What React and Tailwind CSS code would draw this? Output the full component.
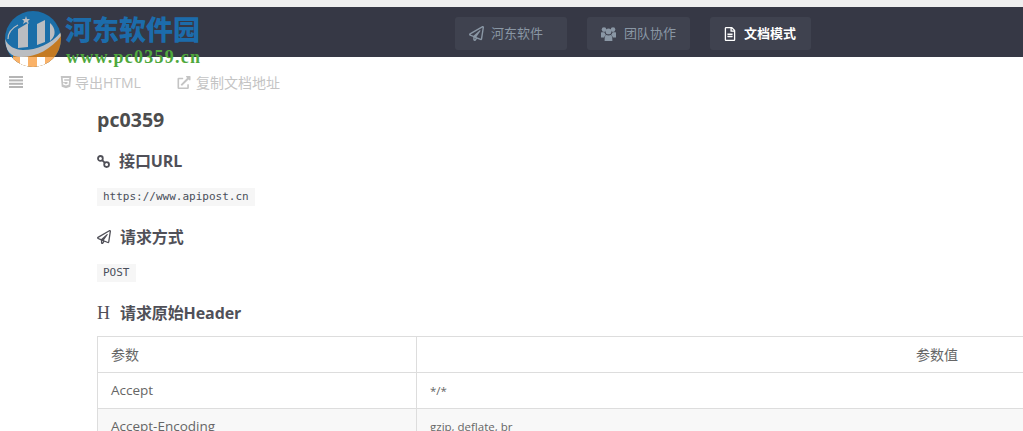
import React from 'react';
import { FaRegPaperPlane, FaRegFileAlt, FaHtml5, FaExternalLinkAlt } from 'react-icons/fa';

const Logo = () => (
    <svg width="56" height="56" viewBox="0 0 56 56" className="absolute left-[5px] top-[11px]">
        <defs>
            <clipPath id="disc">
                <circle cx="28" cy="28" r="28" />
            </clipPath>
        </defs>
        <g clipPath="url(#disc)">
            <rect width="56" height="56" fill="#1b6ea8" />
            {/* orange band, fades below the dark bar */}
            <path d="M56 22 L56 56 L8 56 L8 44 C28 48 44 38 56 22 Z" fill="#c47a22" />
            <path d="M8 46 L56 46 L56 56 L8 56 Z" fill="#fab268" />
            <rect x="15" y="46" width="8" height="10" fill="#ffffff" />
            <rect x="32" y="46" width="8" height="10" fill="#ffffff" />
            <path d="M0 28 C3 35 10 39 18 39 C32 39 46 33 56 21 L56 25 C46 38 32 46 16 46 C6 46 0 40 0 28 Z" fill="#bbbdc1" />
            <path d="M3 28 C3 22 7 17 13 14" fill="none" stroke="#bbbdc1" strokeWidth="1.2" />
            {/* numerals */}
            <path d="M13 18 L23 12 L23 36 L13 37 Z" fill="#bbbdc1" />
            <path d="M32 13 L40 9 L40 31 L32 34 Z" fill="#bbbdc1" />
            <path d="M45 12 C51 17 51 25 46 29 L45 30 Z" fill="#bbbdc1" />
            <path d="M21 5 L22 8 L25 8 L23 10 L24 13 L21 11 L18 13 L19 10 L17 8 L20 8 Z" fill="#bbbdc1" />
        </g>
    </svg>
);

const UsersIcon = () => (
    <svg width="15" height="14" viewBox="0 0 15 14" fill="currentColor" className="mr-[8px]">
        <circle cx="3" cy="2.6" r="2.3" />
        <circle cx="12" cy="2.6" r="2.3" />
        <circle cx="7.5" cy="4.4" r="2.9" />
        <path d="M0 5.6 C1 5 2.4 5.2 3.6 5.6 C3.8 6.6 4.2 7.4 5 8 C4 8.6 3.4 9.4 3.2 10.4 L0 10.4 Z" />
        <path d="M15 5.6 C14 5 12.6 5.2 11.4 5.6 C11.2 6.6 10.8 7.4 10 8 C11 8.6 11.6 9.4 11.8 10.4 L15 10.4 Z" />
        <path d="M5 8 C6.4 8.6 8.6 8.6 10 8 C11 8.6 11.4 10 11.4 14 L3.6 14 C3.6 10 4 8.6 5 8 Z" />
    </svg>
);

const BarsIcon = () => (
    <svg width="14" height="12" viewBox="0 0 14 12" fill="#b5b5b5" className="ml-[9px]">
        <rect y="0" width="14" height="2" />
        <rect y="3.4" width="14" height="2" />
        <rect y="6.8" width="14" height="2" />
        <rect y="10" width="14" height="2" />
    </svg>
);

const ChainIcon = () => (
    <svg width="13" height="13" viewBox="0 0 13 13" fill="none" stroke="currentColor" strokeWidth="1.8" className="mr-[9px]">
        <circle cx="3.4" cy="3.4" r="2.4" />
        <circle cx="9.6" cy="9.6" r="2.4" />
        <path d="M4.8 4.8 L8.2 8.2" />
    </svg>
);

const NavButton = ({ icon, label, active, className }) => (
    <div className={`h-[33px] rounded-[3px] bg-[#3f424f] flex items-center text-[13px] ${active ? 'text-white font-bold' : 'text-[#8a97a5]'} ${className}`}>
        {icon}
        <span>{label}</span>
    </div>
);

const Heading = ({ icon, label, className }) => (
    <h3 className={`flex items-center text-[16px] leading-[22px] font-bold text-[#505058] tracking-[-0.1px] ${className}`}>
        {icon}
        <span>{label}</span>
    </h3>
);

const Code = ({ children, className }) => (
    <code className={`block w-fit h-[18px] px-[6px] bg-[#f6f6f6] text-[#4a4f5a] text-[11px] leading-[18px] font-['DejaVu_Sans_Mono','Liberation_Mono',monospace] ${className}`}>
        {children}
    </code>
);

const App = () => {
    return (
        <div className="relative w-[1023px] h-[431px] overflow-hidden bg-white font-['Open_Sans','Noto_Sans_CJK_SC',sans-serif]">
            {/* Top bars */}
            <div className="h-[7px] bg-[#efefef]" />
            <div className="h-[50px] bg-[#363845] flex items-start pt-[10px] pl-[455px]">
                <NavButton className="w-[112px] pl-[14px]" label="河东软件" icon={<FaRegPaperPlane className="w-[15px] h-[15px] mr-[7px]" />} />
                <NavButton className="w-[103px] ml-[20px] pl-[14px]" label="团队协作" icon={<UsersIcon />} />
                <NavButton active className="w-[101px] ml-[20px] pl-[14px]" label="文档模式" icon={<FaRegFileAlt className="w-[12px] h-[14px] mr-[8px]" />} />
            </div>

            {/* Watermark logo */}
            <Logo />
            <div className="absolute left-[65px] top-[11px] text-[27px] leading-[36px] font-black text-[#1c6cab] font-['Noto_Sans_CJK_SC',serif]">河东软件园</div>
            <div className="absolute left-[66px] top-[47px] text-[18px] leading-[20px] font-bold text-[#4fa83d] font-['Liberation_Serif',serif] tracking-[1.25px]">www.pc0359.cn</div>

            {/* Toolbar */}
            <div className="h-[26px] mt-[12px] flex items-center text-[14px] text-[#c4c4c4]">
                <BarsIcon />
                <FaHtml5 className="w-[12px] h-[14px] ml-[37px] mr-[3px]" />
                <span>导出HTML</span>
                <FaExternalLinkAlt className="w-[14px] h-[13px] ml-[36px] mr-[5px]" />
                <span>复制文档地址</span>
            </div>

            {/* Document */}
            <div className="pl-[97px]">
                <h1 className="mt-[11px] text-[19.6px] leading-[28px] font-bold text-[#4d4d4d]">pc0359</h1>
                <Heading className="mt-[16px]" label="接口URL" icon={<ChainIcon />} />
                <Code className="mt-[16px]">https://www.apipost.cn</Code>
                <Heading className="mt-[20px]" label="请求方式" icon={<FaRegPaperPlane className="w-[14px] h-[14px] mr-[9px]" />} />
                <Code className="mt-[16px]">POST</Code>
                <Heading className="mt-[20px]" label="请求原始Header" icon={<span className="w-[14px] mr-[9px] text-[18px] font-normal font-['Liberation_Serif',serif]">H</span>} />

                <table className="mt-[12px] w-[1360px] table-fixed border-collapse text-[13.5px] text-[#666]">
                    <colgroup>
                        <col className="w-[319px]" />
                        <col className="w-[1041px]" />
                    </colgroup>
                    <tbody>
                        <tr className="h-[36px] text-[14px]">
                            <td className="border border-[#dddddd] px-[13px]">参数</td>
                            <td className="border border-[#dddddd] px-[13px] text-center">参数值</td>
                        </tr>
                        <tr className="h-[36px]">
                            <td className="border border-[#dddddd] px-[13px]">Accept</td>
                            <td className="border border-[#dddddd] px-[13px] text-[11.5px]">*/*</td>
                        </tr>
                        <tr className="h-[36px] bg-[#f8f8f8]">
                            <td className="border border-[#dddddd] px-[13px]">Accept-Encoding</td>
                            <td className="border border-[#dddddd] px-[13px] text-[11.5px]">gzip, deflate, br</td>
                        </tr>
                    </tbody>
                </table>
            </div>
        </div>
    );
};

export default App;
